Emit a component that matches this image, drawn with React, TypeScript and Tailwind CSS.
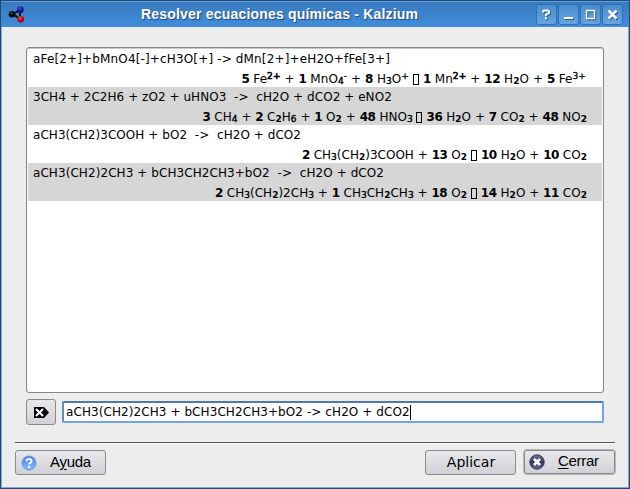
import React from "react";

// Formula markup: *bold*, _x_ subscript, ^x^ superscript, > arrow placeholder.
function Formula({ text }: { text: string }) {
  const parts = text.match(/\*[^*]+\*|_[^_]+_|\^[^^]+\^|>|[^*_^>]+/g) ?? [];
  return (
    <>
      {parts.map((p, i) => {
        const body = p.slice(1, -1);
        if (p[0] === "*") return <b key={i} className="tracking-[-0.4px]">{body}</b>;
        if (p[0] === "_")
          return (
            <span key={i} className={`relative top-px text-[9px] ${body === "2" ? "font-bold" : "[-webkit-text-stroke:0.4px_black]"}`}>
              {body}
            </span>
          );
        if (p[0] === "^")
          return (
            <span key={i} className={`relative -top-[4px] text-[9px] ${body === "2+" ? "[-webkit-text-stroke:0.6px_black]" : "[-webkit-text-stroke:0.3px_black]"}`}>
              {body}
            </span>
          );
        if (p === ">") return <span key={i} className="mr-[4px] inline-block h-[11px] w-[6px] translate-y-[2px] border border-black" />;
        return <span key={i}>{p}</span>;
      })}
    </>
  );
}

type Row = { source: string; result: string; sourceClass: string; resultClass: string };

const rows: Row[] = [
  {
    source: "aFe[2+]+bMnO4[-]+cH3O[+] -> dMn[2+]+eH2O+fFe[3+]",
    result: "*5* Fe^2+^ + *1* MnO_4_^-^ + *8* H_3_O^+^ >*1* Mn^2+^ + *12* H_2_O + *5* Fe^3+^",
    sourceClass: "tracking-[0.15px]",
    resultClass: "mr-[16px] tracking-[0.08px]",
  },
  {
    source: "3CH4 + 2C2H6 + zO2 + uHNO3  ->  cH2O + dCO2 + eNO2",
    result: "*3* CH_4_ + *2* C_2_H_6_ + *1* O_2_ + *48* HNO_3_ >*36* H_2_O + *7* CO_2_ + *48* NO_2_",
    sourceClass: "tracking-[0.05px]",
    resultClass: "mr-[15px] tracking-[0.02px]",
  },
  {
    source: "aCH3(CH2)3COOH + bO2  ->  cH2O + dCO2",
    result: "*2* CH_3_(CH_2_)3COOH + *13* O_2_ >*10* H_2_O + *10* CO_2_",
    sourceClass: "tracking-[0.05px]",
    resultClass: "mr-[15px] tracking-[0.01px]",
  },
  {
    source: "aCH3(CH2)2CH3 + bCH3CH2CH3+bO2  ->  cH2O + dCO2",
    result: "*2* CH_3_(CH_2_)2CH_3_ + *1* CH_3_CH_2_CH_3_ + *18* O_2_ >*14* H_2_O + *11* CO_2_",
    sourceClass: "tracking-[0.07px]",
    resultClass: "mr-[15px] tracking-[0.02px]",
  },
];

function AppIcon() {
  return (
    <svg width="18" height="18" viewBox="0 0 18 18">
      <defs>
        <radialGradient id="blueAtom" cx=".4" cy=".3"><stop stopColor="#5050d8" /><stop offset="1" stopColor="#10108c" /></radialGradient>
        <radialGradient id="redAtom" cx=".4" cy=".3"><stop stopColor="#f05050" /><stop offset="1" stopColor="#a90000" /></radialGradient>
        <radialGradient id="blackAtom" cx=".4" cy=".3"><stop stopColor="#444" /><stop offset=".7" stopColor="#080808" /></radialGradient>
      </defs>
      <path d="M5 8 12 4V13Z" fill="none" stroke="#111" strokeWidth="2" />
      <circle cx="4" cy="8.3" r="3.3" fill="url(#blackAtom)" />
      <circle cx="12.3" cy="3.7" r="3.4" fill="url(#blueAtom)" />
      <circle cx="12.7" cy="13.2" r="3.3" fill="url(#redAtom)" />
    </svg>
  );
}

const glyphs: Record<string, React.ReactNode> = {
  Ayuda: <path d="M6 7.5V6.5L7 5.5H11L12 6.5V8L9 9.5V11.2M9 12.2V14.2" />,
  Minimizar: <path d="M5 13h9" />,
  Maximizar: <path d="M5 5.5h9M5.5 5v9M5 13.5h9M13.5 5v9" strokeWidth="1.4" />,
  Cerrar: <path d="m5.5 5.5 8 8M13.5 5.5l-8 8" strokeWidth="2.5" />,
};

function TitleButton({ name }: { name: string }) {
  return (
    <button aria-label={name} className="h-[21px] w-[21px] rounded-[3px] border border-[#2e70b5] bg-gradient-to-b from-[#4b8cce] to-[#67a3e0]">
      <svg width="19" height="19" viewBox="0 0 19 19" fill="none" strokeWidth="2">
        <g stroke="#285d98" transform="translate(1 1)">{glyphs[name]}</g>
        <g stroke="white">{glyphs[name]}</g>
      </svg>
    </button>
  );
}

const button = "flex items-center rounded-[3px] border border-[#89898e] bg-gradient-to-b from-[#e8e8ec] to-[#d0d0d6]";

export default function App() {
  return (
    <div className="flex h-[489px] w-[630px] flex-col overflow-hidden border border-[#204878] bg-[#ededed] font-['DejaVu_Sans',sans-serif] text-black">
      <header className="flex h-[26px] shrink-0 items-center border-t border-[#679fdb] bg-gradient-to-b from-[#377abe] to-[#438ddc] pl-[7px] pr-[6px]">
        <AppIcon />
        <h1 className="mb-px ml-[115px] whitespace-nowrap font-['Liberation_Sans',sans-serif] text-[14px] font-bold leading-[18px] tracking-[0.19px] text-white [text-shadow:1px_1px_1px_#214977]">
          Resolver ecuaciones químicas - Kalzium
        </h1>
        <div className="ml-auto flex gap-px">
          {["Ayuda", "Minimizar", "Maximizar", "Cerrar"].map((n) => <TitleButton key={n} name={n} />)}
        </div>
      </header>
      <main className="flex min-h-0 flex-1 flex-col border-x border-b border-[#8ba8c5] px-[13px]">
        <div className="mx-[11px] mt-[20px] h-[346px] w-[578px] shrink-0 rounded-[3px] border border-[#858585] bg-white p-px shadow-[inset_0_1px_0_#c9c9c9]">
          {rows.map((r, i) => (
            <div key={i} className={`h-[38px] pl-[5px] pt-px text-[12px] leading-[19px] ${i % 2 ? "bg-[#d6d6d6]" : ""}`}>
              <div className={`whitespace-pre ${r.sourceClass}`}>{r.source}</div>
              <div className={`flex justify-end pt-px ${r.resultClass}`}><span className="whitespace-pre"><Formula text={r.result} /></span></div>
            </div>
          ))}
        </div>
        <div className="ml-[11px] mt-[6px] flex items-center">
          <button aria-label="Limpiar" className={`${button} h-[26px] w-[30px] justify-center`}>
            <svg width="17" height="13" viewBox="0 0 17 13">
              <path d="M1 1h10l5 5.5-5 5.5H1Z" fill="#050505" />
              <path d="m3 3 7 7M10 3l-7 7" stroke="white" strokeWidth="2" />
            </svg>
          </button>
          <div className="ml-[6px] flex h-[22px] w-[542px] items-center whitespace-pre rounded-[2px] border-2 border-[#75a5db] border-l-[#608fc6] border-t-[#4f79ab] bg-white pl-[2px] text-[12px] tracking-[0.08px]">
            <span>{"aCH3(CH2)2CH3 + bCH3CH2CH3+bO2 -> cH2O + dCO2"}</span>
            <span className="h-[15px] w-px bg-black" />
          </div>
        </div>
        <div className="mt-[17px] h-[2px] w-[600px] border-b border-t border-b-white border-t-[#555]" />
        <footer className="mt-[6px] flex items-start font-['Liberation_Sans',sans-serif] text-[15px]">
          <button className={`${button} h-[25px] w-[91px] pl-[5px]`}>
            <svg width="16" height="16" viewBox="0 0 16 16">
              <defs><linearGradient id="help" x2="0" y2="1"><stop stopColor="#3b79e8" /><stop offset="1" stopColor="#8dbfff" /></linearGradient></defs>
              <circle cx="8" cy="8" r="7" fill="url(#help)" stroke="#6d93dc" />
              <path d="M5.5 6.2c0-3 5-3 5 0 0 1.7-2.5 1.7-2.5 3.3M8 11.1v2" fill="none" stroke="white" strokeWidth="2" />
            </svg>
            <span className="ml-[13px] tracking-[-0.3px]">A<u className="underline-offset-2">y</u>uda</span>
          </button>
          <button className={`${button} ml-[319px] h-[25px] w-[91px] justify-center pl-px font-['DejaVu_Sans',sans-serif] text-[14px]`}>Aplicar</button>
          <button className={`${button} ml-[8px] h-[24px] w-[91px] pl-[4px] shadow-[0_0_0_1px_#b5b5ba]`}>
            <svg width="16" height="16" viewBox="0 0 16 16">
              <defs><linearGradient id="close" x2="0" y2="1"><stop stopColor="#777799" /><stop offset=".5" stopColor="#33335b" /><stop offset="1" stopColor="#666692" /></linearGradient></defs>
              <circle cx="8" cy="8" r="7.2" fill="url(#close)" stroke="#37375c" />
              <path d="m5 5 6 6M11 5l-6 6" stroke="white" strokeWidth="2.7" />
            </svg>
            <span className="ml-[13px] mt-[-1px] tracking-[-0.3px]"><u className="underline-offset-2">C</u>errar</span>
          </button>
        </footer>
      </main>
    </div>
  );
}
